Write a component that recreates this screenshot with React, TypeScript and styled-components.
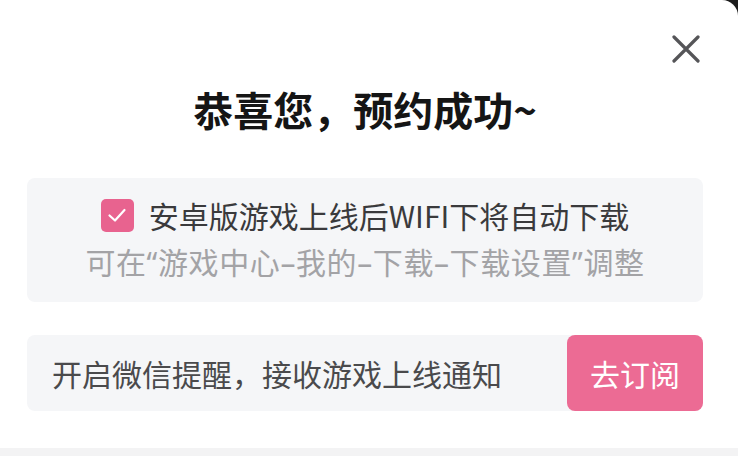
import React from "react";
import styled, { createGlobalStyle } from "styled-components";

const Global = createGlobalStyle`
  html, body {
    margin: 0;
    padding: 0;
    background: #1c1c1c;
  }
  body {
    font-family: "Noto Sans CJK SC", "Noto Sans", sans-serif;
  }
`;

const Screen = styled.div`
  width: 738px;
  height: 456px;
  display: flex;
  flex-direction: column;
  overflow: hidden;
`;

const Sheet = styled.div`
  position: relative;
  height: 448px;
  background: #ffffff;
  border-top-right-radius: 16px;
  padding: 85px 35px 0 27px;
  box-sizing: border-box;
  display: flex;
  flex-direction: column;
`;

const BottomStrip = styled.div`
  flex: 1;
  background: #f3f3f4;
`;

const CloseButton = styled.button`
  position: absolute;
  top: 35px;
  right: 38px;
  width: 28px;
  height: 28px;
  padding: 0;
  border: 0;
  background: transparent;
  display: flex;
  align-items: center;
  justify-content: center;
  cursor: pointer;
`;

const Title = styled.h1`
  margin: 0;
  font-size: 40px;
  line-height: 48px;
  font-weight: 700;
  color: #151515;
  text-align: center;
`;

const InfoBox = styled.div`
  margin-top: 45px;
  background: #f5f6f8;
  border-radius: 8px;
  padding: 14px 0 18px;
  display: flex;
  flex-direction: column;
  align-items: center;
`;

const InfoLine = styled.div<{ $muted?: boolean }>`
  display: flex;
  align-items: center;
  gap: 15px;
  height: 46px;
  font-size: 30px;
  line-height: 46px;
  letter-spacing: ${(p) => (p.$muted ? "0.6px" : "0")};
  color: ${(p) => (p.$muted ? "#a3a3a6" : "#3a3a3c")};
  white-space: nowrap;
`;

/* Latin punctuation (quotes, dashes) set in a narrow Latin face */
const Punct = styled.span`
  font-family: "Noto Sans", sans-serif;
  line-height: 1;
`;

const CheckBox = styled.span`
  width: 33px;
  height: 33px;
  border-radius: 5px;
  background: #e8638f;
  display: flex;
  align-items: center;
  justify-content: center;
  flex-shrink: 0;
`;

const NotifyRow = styled.div`
  margin-top: 33px;
  height: 76px;
  background: #f5f6f8;
  border-radius: 8px;
  display: flex;
  align-items: center;
  justify-content: space-between;
`;

const NotifyText = styled.span`
  padding-left: 25px;
  font-size: 30px;
  color: #4a4a4c;
  white-space: nowrap;
`;

const SubscribeButton = styled.button`
  width: 136px;
  height: 76px;
  border: 0;
  border-radius: 8px;
  background: #ec6b94;
  color: #ffffff;
  font-family: "Noto Sans CJK SC", "Noto Sans", sans-serif;
  font-size: 30px;
  cursor: pointer;
`;

export default function App() {
  return (
    <>
      <Global />
      <Screen>
        <Sheet>
          <CloseButton aria-label="关闭">
            <svg width="28" height="28" viewBox="0 0 28 28">
              <path
                d="M2 2 L26 26 M26 2 L2 26"
                stroke="#555558"
                strokeWidth="3.2"
                strokeLinecap="round"
              />
            </svg>
          </CloseButton>
          <Title>恭喜您，预约成功~</Title>
          <InfoBox>
            <InfoLine>
              <CheckBox>
                <svg width="22" height="22" viewBox="0 0 22 22">
                  <path
                    d="M3.5 11.5 L9 16.5 L18.5 6"
                    fill="none"
                    stroke="#ffffff"
                    strokeWidth="2.2"
                    strokeLinecap="round"
                    strokeLinejoin="round"
                  />
                </svg>
              </CheckBox>
              安卓版游戏上线后WIFI下将自动下载
            </InfoLine>
            <InfoLine $muted>
              <span>
                可在<Punct>“</Punct>游戏中心<Punct>–</Punct>我的<Punct>–</Punct>下载
                <Punct>–</Punct>下载设置<Punct>”</Punct>调整
              </span>
            </InfoLine>
          </InfoBox>
          <NotifyRow>
            <NotifyText>开启微信提醒，接收游戏上线通知</NotifyText>
            <SubscribeButton>去订阅</SubscribeButton>
          </NotifyRow>
        </Sheet>
        <BottomStrip />
      </Screen>
    </>
  );
}
